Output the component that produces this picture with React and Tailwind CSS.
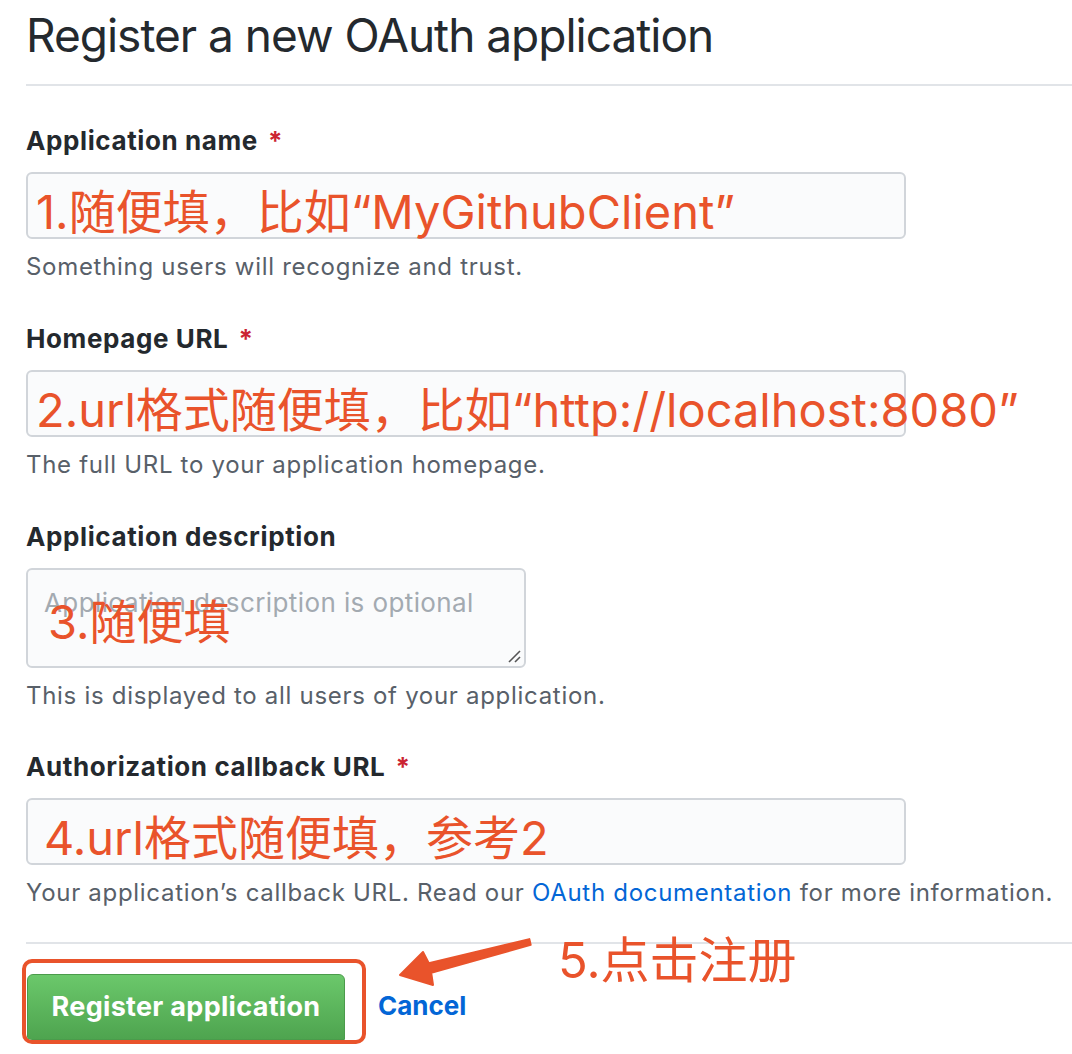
import React from "react";

const RED = "text-[#e9532b]";

const Label = ({ children, required }) => (
  <label className="block text-[26px] leading-[34px] font-bold tracking-[0.6px] text-[#24292e]">
    {children}
    {required && <span className="ml-[10px] text-[#cb2431]">*</span>}
  </label>
);

const Note = ({ children }) => (
  <p className="mt-[12px] text-[24px] leading-[32px] tracking-[0.7px] text-[#586069]">{children}</p>
);

const Field = ({ children }) => (
  <div className="mt-[14px] flex h-[67px] w-[880px] items-center rounded-[6px] border-2 border-[#d1d5da] bg-[#fafbfc] pl-[8px] pt-[12px]">
    <span className={`whitespace-nowrap text-[47px] leading-[50px] ${RED}`}>{children}</span>
  </div>
);

export default function App() {
  return (
    <div
      className="relative min-h-[1054px] bg-white pl-[26px]"
      style={{ fontFamily: 'Inter, "Noto Sans CJK SC", sans-serif' }}
    >
      <h1 className="border-b-2 border-[#e1e4e8] pt-[7px] pb-[21px] text-[46px] leading-[56px] font-normal tracking-[-1px] text-[#24292e]">
        Register a new OAuth application
      </h1>

      <div className="mt-[38px]">
        <Label required>Application name</Label>
        <Field>1.随便填，比如“MyGithubClient”</Field>
        <Note>Something users will recognize and trust.</Note>
      </div>

      <div className="mt-[39px]">
        <Label required>Homepage URL</Label>
        <Field>2.url格式随便填，比如“http://localhost:8080”</Field>
        <Note>The full URL to your application homepage.</Note>
      </div>

      <div className="mt-[39px]">
        <Label>Application description</Label>
        <div className="relative mt-[14px] h-[100px] w-[500px] rounded-[6px] border-2 border-[#d1d5da] bg-[#fafbfc]">
          <span className="absolute left-[16px] top-[16px] text-[26px] leading-[34px] tracking-[0.4px] text-[#a3aab1]">
            Application description is optional
          </span>
          <span className={`absolute left-[20px] top-[27px] text-[47px] leading-[50px] ${RED}`}>3.随便填</span>
          <svg className="absolute bottom-[2px] right-[2px]" width="16" height="16" viewBox="0 0 16 16">
            <line x1="3" y1="14" x2="14" y2="3" stroke="#555" strokeWidth="1.6" />
            <line x1="9" y1="14" x2="14" y2="9" stroke="#555" strokeWidth="1.6" />
          </svg>
        </div>
        <Note>This is displayed to all users of your application.</Note>
      </div>

      <div className="mt-[38px]">
        <Label required>Authorization callback URL</Label>
        <Field>
          <span className="ml-[8px]">4.url格式随便填，参考2</span>
        </Field>
        <Note>
          Your application’s callback URL. Read our{" "}
          <a className="text-[#0366d6]">OAuth documentation</a> for more information.
        </Note>
      </div>

      <div className="mt-[33px] border-t-2 border-[#e1e4e8]">
        <div className="mt-[15px] flex items-start">
          <div className="-ml-[4px] overflow-hidden rounded-[10px] border-[4px] border-[#e9532b] pt-[11px] pl-[1px] pr-[17px]">
            <button className="flex h-[66px] w-[318px] items-center justify-center rounded-t-[6px] border border-[#4b9b4b] bg-gradient-to-b from-[#6bc86b] to-[#4ea44f] text-[27px] font-bold tracking-[0.3px] text-white">
              Register application
            </button>
          </div>
          <a className="ml-[12px] mt-[30px] text-[26px] leading-[34px] font-bold text-[#0366d6]">Cancel</a>
        </div>
      </div>

      <span className={`absolute left-[558px] top-[934px] text-[49px] leading-[54px] ${RED}`}>5.点击注册</span>
      <svg className="absolute left-0 top-0 pointer-events-none" width="1072" height="1054" viewBox="0 0 1072 1054">
        <polygon
          points="400,975 423,952 428.8,963.1 529.3,939.1 530.7,944.9 431.2,972.9 433,985"
          fill="#e9532b"
          stroke="#e9532b"
          strokeWidth="2"
          strokeLinejoin="round"
        />
      </svg>
    </div>
  );
}
